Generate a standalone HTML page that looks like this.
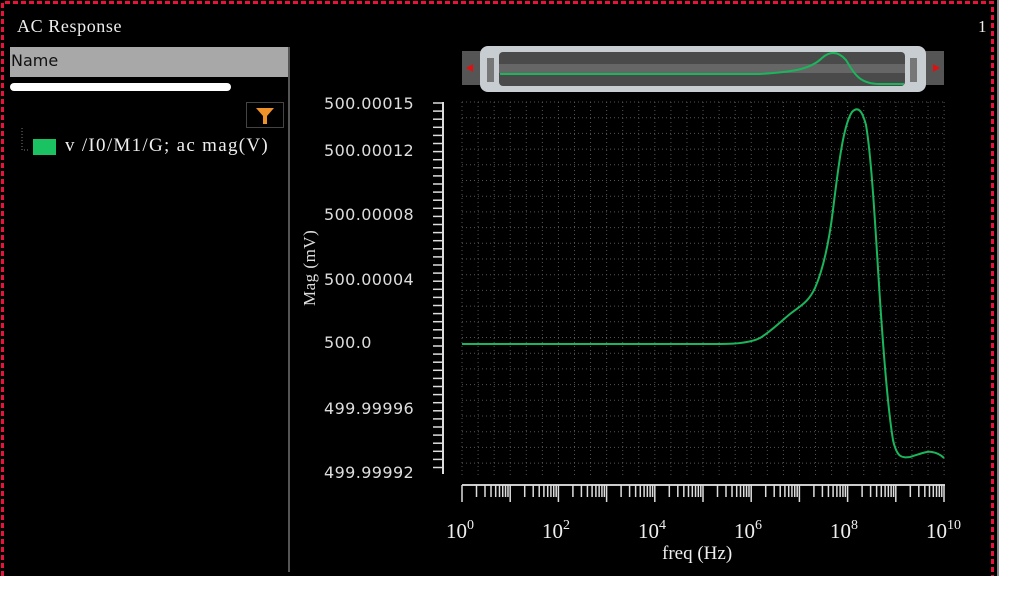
<!DOCTYPE html>
<html><head><meta charset="utf-8"><style>
html,body{margin:0;padding:0;width:1011px;height:589px;background:#fff;overflow:hidden}
#bg{position:absolute;left:0;top:0;width:997px;height:576px;background:#000}
#rl{position:absolute;left:997px;top:0;width:2px;height:576px;background:#888}
.t{position:absolute;color:#eee;font-family:"Liberation Serif",serif;white-space:nowrap}
.s{position:absolute;color:#ddd;font-family:"DejaVu Sans","Liberation Sans",sans-serif;font-size:16px;letter-spacing:0.4px;white-space:nowrap}
</style></head><body>
<div id="bg"></div><div id="rl"></div>
<svg width="1011" height="589" style="position:absolute;left:0;top:0" id="sv">
<path d="M2.5 576 V2.5 H992.5 V576" fill="none" stroke="#e8123a" stroke-width="3" stroke-dasharray="5,3"/>
<rect x="10" y="47" width="280" height="30" fill="#a8a8a8"/>
<line x1="289" y1="47" x2="289" y2="572" stroke="#555" stroke-width="2"/>
<rect x="10" y="83" width="221" height="8" rx="4" fill="#fff"/>
<rect x="246.5" y="102.5" width="37" height="25" fill="#000" stroke="#444"/>
<path d="M256 108 H274 L267 116 V124 H263 V116 Z" fill="#f0922a"/>
<path d="M22 128 V150 H30" fill="none" stroke="#777" stroke-dasharray="1,2"/>
<rect x="33" y="139" width="23" height="16" fill="#1bc262"/>
<rect x="462" y="51" width="482" height="34" fill="#555"/>
<rect x="480" y="46" width="446" height="46" rx="8" fill="#c8cdd2"/>
<rect x="499" y="52" width="406" height="34" rx="4" fill="#4a4a4a"/>
<rect x="499" y="64" width="406" height="9" fill="#666"/>
<rect x="487" y="58" width="7" height="24" fill="#777"/><rect x="910" y="58" width="7" height="24" fill="#777"/>
<path d="M466 68 l7 -4 v8z" fill="#e01010"/><path d="M940 68 l-7 -4 v8z" fill="#e01010"/>
<path d="M500 74 H760 C790 72 810 70 822 58 C830 51 838 51 846 60 C855 75 860 84 880 84 H904" fill="none" stroke="#1bb55c" stroke-width="2"/>
<g id="grid"></g>
<path d="M462 344 H720 C740 344 752 342 760 338 C770 332 778 324 790 314 C800 306 808 303 815 288 C822 272 828 250 833 210 C838 170 843 125 852 112 C858 106 862 110 866 125 C872 160 876 240 880 300 C884 360 888 410 893 440 C897 458 902 458 910 457 C920 454 926 451 932 452 C938 453 942 456 944 458" fill="none" stroke="#1bb55c" stroke-width="2"/>
<text x="0" y="0" transform="translate(315,306) rotate(-90)" fill="#ddd" font-family="Liberation Serif,serif" font-size="17" letter-spacing="0.5">Mag (mV)</text>
</svg>
<div class="t" style="left:17px;top:16px;font-size:18px;letter-spacing:0.6px">AC Response</div>
<div class="t" style="left:978px;top:17px;font-size:17px">1</div>
<div style="position:absolute;left:11px;top:51px;font:16px 'DejaVu Sans',sans-serif;color:#111">Name</div>
<div class="t" style="left:65px;top:135px;font-size:19px;letter-spacing:1.3px">v /I0/M1/G; ac mag(V)</div>
<div class="s" style="left:324px;top:94px">500.00015</div>
<div class="s" style="left:324px;top:141px">500.00012</div>
<div class="s" style="left:324px;top:205px">500.00008</div>
<div class="s" style="left:324px;top:270px">500.00004</div>
<div class="s" style="left:324px;top:333px">500.0</div>
<div class="s" style="left:324px;top:399px">499.99996</div>
<div class="s" style="left:324px;top:463px">499.99992</div>
<div class="t" style="left:446px;top:518px;font-size:21px">10<sup style="font-size:14px;vertical-align:9px">0</sup></div>
<div class="t" style="left:542px;top:518px;font-size:21px">10<sup style="font-size:14px;vertical-align:9px">2</sup></div>
<div class="t" style="left:638px;top:518px;font-size:21px">10<sup style="font-size:14px;vertical-align:9px">4</sup></div>
<div class="t" style="left:734px;top:518px;font-size:21px">10<sup style="font-size:14px;vertical-align:9px">6</sup></div>
<div class="t" style="left:830px;top:518px;font-size:21px">10<sup style="font-size:14px;vertical-align:9px">8</sup></div>
<div class="t" style="left:926px;top:518px;font-size:21px">10<sup style="font-size:14px;vertical-align:9px">10</sup></div>
<div class="t" style="left:662px;top:543px;font-size:19px">freq (Hz)</div>
<script>
var g=document.getElementById('grid'),h='';
for(var y=102;y<=478;y+=15.7)h+='<line x1="462" y1="'+y+'" x2="944" y2="'+y+'" stroke="#555" stroke-dasharray="1,3"/>';
for(var x=462;x<=945;x+=16.07)h+='<line x1="'+x+'" y1="102" x2="'+x+'" y2="478" stroke="#555" stroke-dasharray="1,3"/>';
h+='<line x1="443" y1="102" x2="443" y2="474" stroke="#ddd" stroke-width="2"/>';
for(var y=103;y<=474;y+=8.1)h+='<line x1="433" y1="'+y+'" x2="443" y2="'+y+'" stroke="#ddd" stroke-width="1.5"/>';
h+='<line x1="462" y1="485" x2="945" y2="485" stroke="#ccc" stroke-width="2"/>';
for(var d=0;d<10;d++){for(var k=1;k<10;k++){var x=462+48.2*(d+Math.log10(k));h+='<line x1="'+x+'" y1="485" x2="'+x+'" y2="'+(k==1?502:497)+'" stroke="#ddd" stroke-width="1.5"/>';}}
h+='<line x1="944" y1="485" x2="944" y2="502" stroke="#ddd" stroke-width="1.5"/>';
g.innerHTML=h;
</script>
</body></html>
